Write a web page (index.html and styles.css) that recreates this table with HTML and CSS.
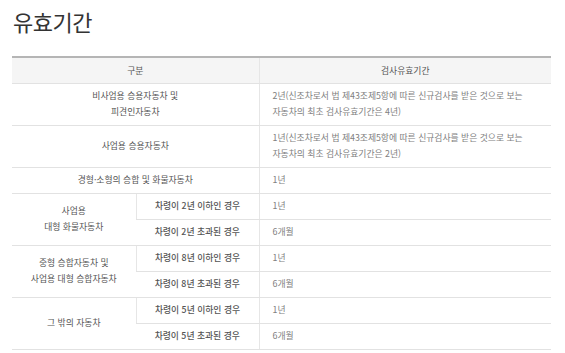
FILE: index.html
```html
<!DOCTYPE html>
<html lang="ko">
<head>
<meta charset="utf-8">
<link rel="stylesheet" href="styles.css">
</head>
<body>
<div class="page">
  <h2 class="title">유효기간</h2>
  <table class="valid">
    <colgroup>
      <col class="c1"><col class="c2"><col class="c3">
    </colgroup>
    <thead>
      <tr><th colspan="2">구분</th><th>검사유효기간</th></tr>
    </thead>
    <tbody>
      <tr class="two">
        <td colspan="2" class="cat">비사업용 승용자동차 및<br>피견인자동차</td>
        <td class="val">2년(신조차로서 법 제43조제5항에 따른 신규검사를 받은 것으로 보는<br>자동차의 최초 검사유효기간은 4년)</td>
      </tr>
      <tr class="two">
        <td colspan="2" class="cat">사업용 승용자동차</td>
        <td class="val">1년(신조차로서 법 제43조제5항에 따른 신규검사를 받은 것으로 보는<br>자동차의 최초 검사유효기간은 2년)</td>
      </tr>
      <tr>
        <td colspan="2" class="cat">경형·소형의 승합 및 화물자동차</td>
        <td class="val">1년</td>
      </tr>
      <tr>
        <td rowspan="2" class="cat">사업용<br>대형 화물자동차</td>
        <td class="sub">차령이 2년 이하인 경우</td>
        <td class="val">1년</td>
      </tr>
      <tr>
        <td class="sub">차령이 2년 초과된 경우</td>
        <td class="val">6개월</td>
      </tr>
      <tr>
        <td rowspan="2" class="cat">중형 승합자동차 및<br>사업용 대형 승합자동차</td>
        <td class="sub">차령이 8년 이하인 경우</td>
        <td class="val">1년</td>
      </tr>
      <tr>
        <td class="sub">차령이 8년 초과된 경우</td>
        <td class="val">6개월</td>
      </tr>
      <tr>
        <td rowspan="2" class="cat">그 밖의 자동차</td>
        <td class="sub">차령이 5년 이하인 경우</td>
        <td class="val">1년</td>
      </tr>
      <tr>
        <td class="sub">차령이 5년 초과된 경우</td>
        <td class="val">6개월</td>
      </tr>
    </tbody>
  </table>
</div>
</body>
</html>
```

FILE: styles.css
```css
html, body {
  margin: 0;
  padding: 0;
  background: #ffffff;
}
body {
  font-family: "Noto Sans CJK KR", "Noto Sans", sans-serif;
  color: #333;
}
.page {
  padding: 6px 14px 0 12px;
}
.title {
  margin: 0 0 0 1px;
  font-size: 22px;
  font-weight: 400;
  line-height: 30px;
  color: #333;
  letter-spacing: -0.5px;
}
.valid {
  margin-top: 20px;
  width: 539px;
  border-collapse: collapse;
  table-layout: fixed;
  font-size: 8.8px;
  line-height: 16px;
  border-top: 2px solid #b5b5b5;
}
.c1 { width: 124px; }
.c2 { width: 123px; }
.c3 { width: 292px; }
.valid th {
  background: #f5f5f5;
  color: #555;
  font-weight: 400;
  height: 25px;
  padding: 0;
  text-align: center;
  border-bottom: 1px solid #e2e2e2;
  border-left: 1px solid #e6e6e6;
}
.valid th:first-child { border-left: none; }
.valid td {
  padding: 4px 0 5px;
  border-bottom: 1px solid #e2e2e2;
  border-left: 1px solid #e6e6e6;
  vertical-align: middle;
}
.valid td:first-child { border-left: none; }
.cat {
  text-align: center;
  color: #555;
}
.sub {
  text-align: center;
  color: #555;
  font-weight: 500;
}
.val {
  text-align: left;
  color: #808080;
  padding-left: 13px !important;
}
```
